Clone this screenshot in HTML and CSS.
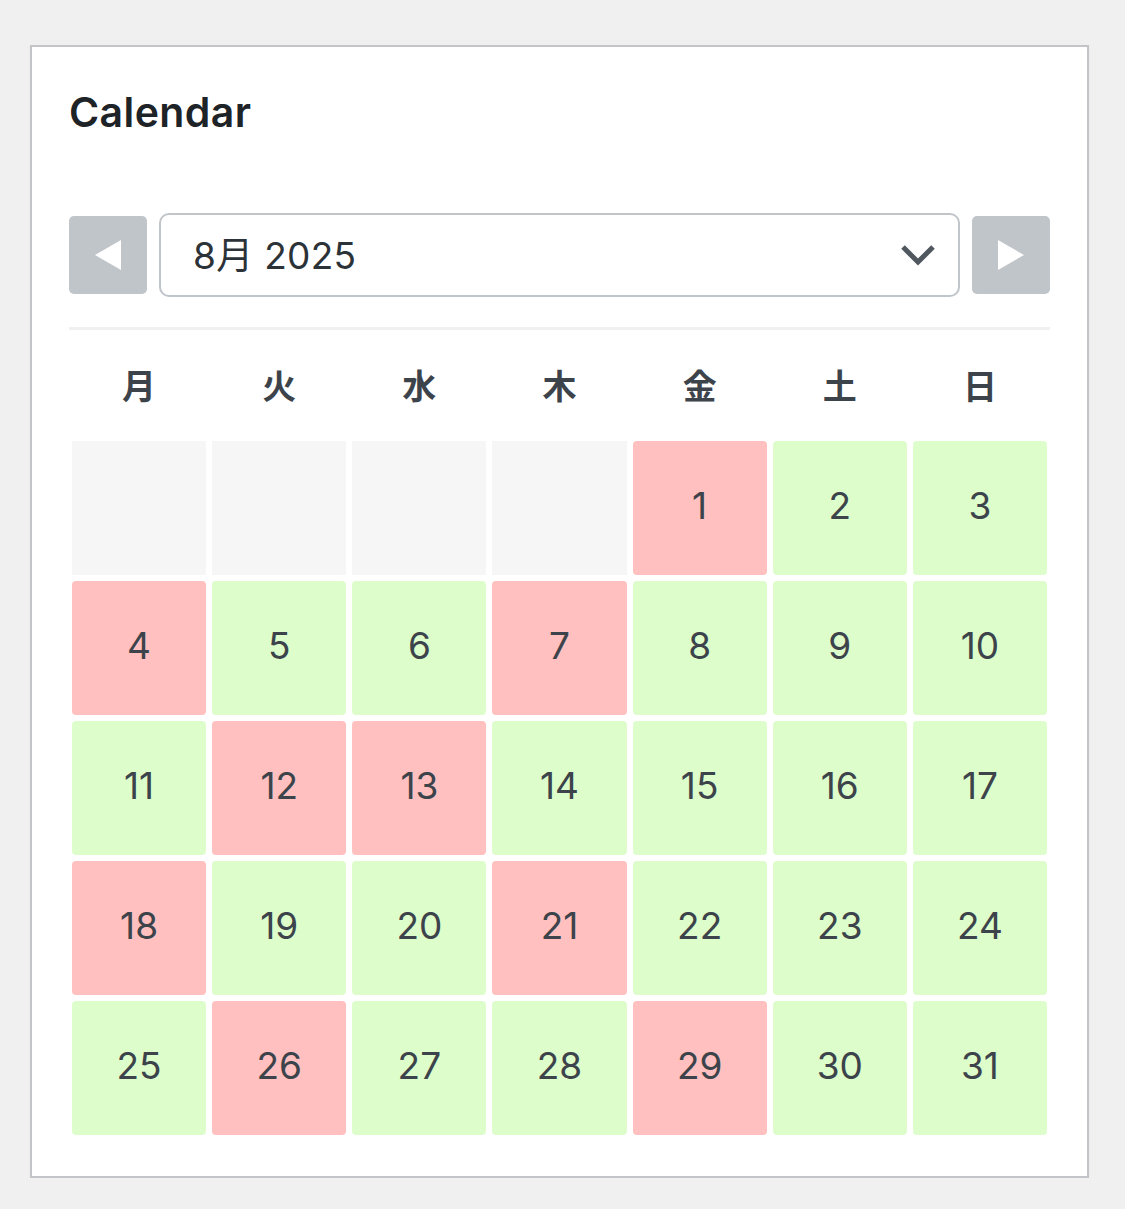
FILE: index.html
```html
<!DOCTYPE html>
<html lang="ja">
<head>
<meta charset="utf-8">
<title>Calendar</title>
<link rel="stylesheet" href="styles.css">
</head>
<body>
<div class="card">
  <h2 class="title">Calendar</h2>
  <div class="nav">
    <button class="nav-btn" aria-label="前の月">
      <svg width="26" height="30" viewBox="0 0 26 30"><polygon points="0,15 26,0 26,30" fill="#fff"/></svg>
    </button>
    <div class="select">
      <span class="select-text">8月 2025</span>
      <svg class="chevron" width="36" height="22" viewBox="0 0 36 22"><polyline points="3,3 18,18 33,3" fill="none" stroke="#50575e" stroke-width="5"/></svg>
    </div>
    <button class="nav-btn" aria-label="次の月">
      <svg width="26" height="30" viewBox="0 0 26 30"><polygon points="26,15 0,0 0,30" fill="#fff"/></svg>
    </button>
  </div>
  <div class="sep"></div>
  <div class="weekdays">
    <div>月</div><div>火</div><div>水</div><div>木</div><div>金</div><div>土</div><div>日</div>
  </div>
  <div class="grid">
    <div class="cell empty"></div>
    <div class="cell empty"></div>
    <div class="cell empty"></div>
    <div class="cell empty"></div>
    <div class="cell busy">1</div>
    <div class="cell free">2</div>
    <div class="cell free">3</div>
    <div class="cell busy">4</div>
    <div class="cell free">5</div>
    <div class="cell free">6</div>
    <div class="cell busy">7</div>
    <div class="cell free">8</div>
    <div class="cell free">9</div>
    <div class="cell free">10</div>
    <div class="cell free">11</div>
    <div class="cell busy">12</div>
    <div class="cell busy">13</div>
    <div class="cell free">14</div>
    <div class="cell free">15</div>
    <div class="cell free">16</div>
    <div class="cell free">17</div>
    <div class="cell busy">18</div>
    <div class="cell free">19</div>
    <div class="cell free">20</div>
    <div class="cell busy">21</div>
    <div class="cell free">22</div>
    <div class="cell free">23</div>
    <div class="cell free">24</div>
    <div class="cell free">25</div>
    <div class="cell busy">26</div>
    <div class="cell free">27</div>
    <div class="cell free">28</div>
    <div class="cell busy">29</div>
    <div class="cell free">30</div>
    <div class="cell free">31</div>
  </div>
</div>
</body>
</html>
```

FILE: styles.css
```css
html, body {
  margin: 0;
  padding: 0;
  background: #f0f0f0;
}
body {
  padding: 45px 36px 0 30px;
  font-family: Inter, "Noto Sans CJK JP", sans-serif;
  color: #3c434a;
}
.card {
  box-sizing: border-box;
  width: 1059px;
  background: #fff;
  border: 2px solid #c3c4c7;
  box-shadow: 0 1px 2px rgba(0,0,0,0.06);
  padding: 0 37px 41px 37px;
}
.title {
  margin: 0;
  padding-top: 40px;
  font-size: 41px;
  line-height: 50px;
  font-weight: 600;
  color: #1d2327;
  letter-spacing: 0.4px;
}
.nav {
  margin-top: 76px;
  display: flex;
  align-items: center;
  gap: 12px;
  height: 84px;
}
.nav-btn {
  flex: 0 0 78px;
  width: 78px;
  height: 78px;
  margin: 0;
  padding: 0;
  border: none;
  border-radius: 5px;
  background: #c0c5ca;
  display: flex;
  align-items: center;
  justify-content: center;
}
.select {
  box-sizing: border-box;
  flex: 1 1 auto;
  height: 84px;
  border: 2px solid #c0c5ca;
  border-radius: 10px;
  display: flex;
  align-items: center;
  justify-content: space-between;
  padding: 0 22px 0 32px;
}
.select-text {
  font-size: 37px;
  color: #2c3338;
  letter-spacing: 0.3px;
  margin-top: -5px;
}
.chevron {
  display: block;
}
.sep {
  margin-top: 30px;
  height: 3px;
  background: #f0f0f0;
}
.weekdays {
  display: grid;
  grid-template-columns: repeat(7, 1fr);
  column-gap: 6px;
  padding: 0 3px;
  height: 111px;
  align-items: center;
  font-family: "Noto Sans CJK JP", sans-serif;
  font-weight: 700;
  font-size: 34px;
  color: #3c434a;
  text-align: center;
}
.weekdays div {
  margin-top: -2px;
}
.grid {
  display: grid;
  grid-template-columns: repeat(7, 1fr);
  grid-auto-rows: 134px;
  gap: 6px;
  padding: 0 3px;
}
.cell {
  box-sizing: border-box;
  display: flex;
  align-items: center;
  justify-content: center;
  padding-bottom: 5px;
  font-size: 37px;
  color: #3c434a;
  border-radius: 4px;
}
.empty {
  background: #f6f6f6;
  border-radius: 0;
}
.busy {
  background: #ffc0bf;
}
.free {
  background: #ddfdcb;
}
```
